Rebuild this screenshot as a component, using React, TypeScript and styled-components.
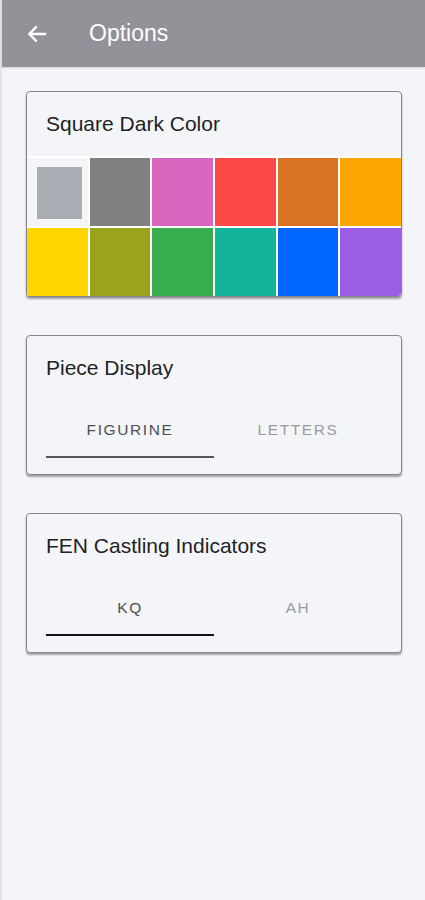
import React, { useState } from "react";
import styled, { createGlobalStyle } from "styled-components";

const GlobalStyle = createGlobalStyle`
  html, body {
    margin: 0;
    padding: 0;
    background: #f4f5f9;
    font-family: "Liberation Sans", Arial, sans-serif;
  }
`;

const Page = styled.div`
  min-height: 900px;
  box-sizing: border-box;
  border-left: 2px solid #e3e4e8;
  background: #f4f5f9;
`;

const TopBar = styled.header`
  height: 67px;
  background: #929299;
  display: flex;
  align-items: center;
  padding-left: 22px;
  box-shadow: 0 1px 2px rgba(0, 0, 0, 0.15);
`;

const BackButton = styled.button`
  width: 26px;
  height: 26px;
  padding: 0;
  border: 0;
  background: none;
  display: flex;
  align-items: center;
  justify-content: center;
  cursor: pointer;
`;

const Title = styled.h1`
  margin: 0 0 0 39px;
  font-size: 23px;
  font-weight: 400;
  color: #ffffff;
  line-height: 1;
`;

const Content = styled.main`
  display: flex;
  flex-direction: column;
  gap: 38px;
  padding: 24px 23px 0 24px;
`;

const Card = styled.section`
  border: 1px solid #85858a;
  border-radius: 4px;
  background: #f4f5f9;
  box-shadow: 0 2px 2px rgba(0, 0, 0, 0.35);
  overflow: hidden;
`;

const CardTitle = styled.h2<{ $pad: string }>`
  margin: 0;
  padding: ${(p) => p.$pad};
  font-size: 21px;
  font-weight: 400;
  color: #1f1f24;
  line-height: 24px;
`;

const Swatches = styled.div`
  display: grid;
  grid-template-columns: repeat(6, 1fr);
  grid-auto-rows: 68px;
  gap: 2px;
  padding-top: 2px;
  background: #ffffff;
`;

const Swatch = styled.button<{ $color: string; $selected: boolean }>`
  border: 0;
  padding: ${(p) => (p.$selected ? "9px 6px 7px 10px" : "0")};
  background: ${(p) => (p.$selected ? "#f4f5f9" : p.$color)};
  cursor: pointer;
  display: flex;
`;

const SwatchInner = styled.span<{ $color: string }>`
  flex: 1;
  background: ${(p) => p.$color};
`;

const Tabs = styled.div`
  display: grid;
  grid-template-columns: 1fr 1fr;
  margin: 14px 19px 16px 19px;
`;

const Tab = styled.button<{ $active: boolean; $bar: string }>`
  box-sizing: border-box;
  height: 64px;
  border: 0;
  background: none;
  padding: 10px 0 0;
  font-family: "Liberation Sans", Arial, sans-serif;
  font-size: 15.5px;
  letter-spacing: 1.6px;
  text-transform: uppercase;
  color: ${(p) => (p.$active ? "#4f4f52" : "#9a9a9e")};
  border-bottom: 2px solid ${(p) => (p.$active ? p.$bar : "transparent")};
  cursor: pointer;
`;

const colors = [
  "#a9acb3",
  "#808080",
  "#d966be",
  "#fe4848",
  "#d87322",
  "#fea500",
  "#ffd700",
  "#9ba31d",
  "#37ae4b",
  "#13b39c",
  "#0066ff",
  "#9b5de5",
];

function ArrowBack() {
  return (
    <svg width="22" height="22" viewBox="0 0 24 24" fill="none">
      <path
        d="M21 12H4M11 4.5L3.5 12L11 19.5"
        stroke="#ffffff"
        strokeWidth="2.6"
        strokeLinecap="round"
        strokeLinejoin="round"
      />
    </svg>
  );
}

function TabCard({
  title,
  options,
  bar,
}: {
  title: string;
  options: string[];
  bar: string;
}) {
  const [value, setValue] = useState(0);
  return (
    <Card>
      <CardTitle $pad="20px 19px 0">{title}</CardTitle>
      <Tabs>
        {options.map((o, i) => (
          <Tab key={o} $active={value === i} $bar={bar} onClick={() => setValue(i)}>
            {o}
          </Tab>
        ))}
      </Tabs>
    </Card>
  );
}

export default function App() {
  const [selected, setSelected] = useState(0);
  return (
    <Page>
      <GlobalStyle />
      <TopBar>
        <BackButton aria-label="Back">
          <ArrowBack />
        </BackButton>
        <Title>Options</Title>
      </TopBar>
      <Content>
        <Card>
          <CardTitle $pad="20px 19px 20px">Square Dark Color</CardTitle>
          <Swatches>
            {colors.map((c, i) => (
              <Swatch
                key={c}
                $color={c}
                $selected={selected === i}
                onClick={() => setSelected(i)}
              >
                {selected === i && <SwatchInner $color={c} />}
              </Swatch>
            ))}
          </Swatches>
        </Card>
        <TabCard title="Piece Display" options={["Figurine", "Letters"]} bar="#555558" />
        <TabCard title="FEN Castling Indicators" options={["KQ", "AH"]} bar="#111114" />
      </Content>
    </Page>
  );
}
